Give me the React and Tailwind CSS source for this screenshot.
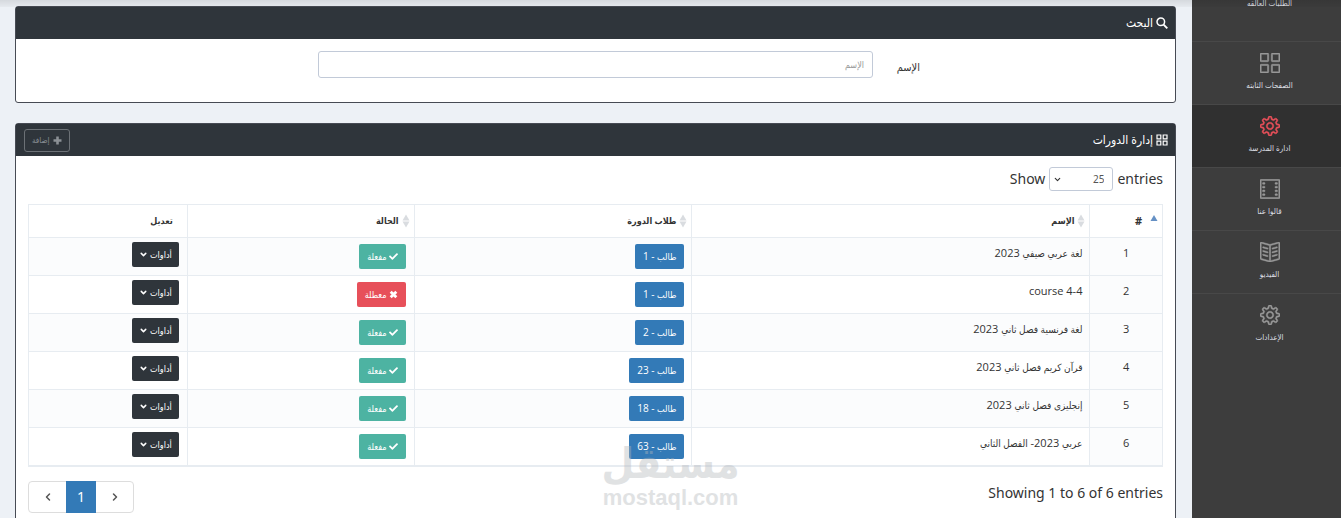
import React from "react";
import { SlSettings, SlFilm, SlBookOpen, SlGrid } from "react-icons/sl";
import { FaCheck } from "react-icons/fa";
import { ChevronDown, ChevronLeft, ChevronRight } from "lucide-react";

const navItems = [
  { label: "الصفحات الثابته", icon: SlGrid },
  { label: "ادارة المدرسة", icon: SlSettings, active: true },
  { label: "قالوا عنا", icon: SlFilm },
  { label: "الفيديو", icon: SlBookOpen },
  { label: "الإعدادات", icon: SlSettings },
];

const courses = [
  { id: 1, name: "لغة عربي صيفي 2023", students: 1, active: true },
  { id: 2, name: "course 4-4", students: 1, active: false },
  { id: 3, name: "لغة فرنسية فصل ثاني 2023", students: 2, active: true },
  { id: 4, name: "قرآن كريم فصل ثاني 2023", students: 23, active: true },
  { id: 5, name: "إنجليزى فصل ثاني 2023", students: 18, active: true },
  { id: 6, name: "عربي 2023- الفصل الثاني", students: 63, active: true },
];

// Arabic runs are set one size smaller than Latin letters and digits.
function Mixed({ text }) {
  return text.split(/([\u0600-\u06ff]+(?:\s+[\u0600-\u06ff]+)*)/).map((part, i) =>
    i % 2 === 1 ? (
      <span key={i} className="text-[10px]">
        {part}
      </span>
    ) : (
      part
    )
  );
}

function Cross() {
  return (
    <svg viewBox="0 0 16 16" className="size-[9px]" aria-hidden="true">
      <path d="M3 3l10 10M13 3L3 13" stroke="currentColor" strokeWidth="5" />
    </svg>
  );
}

function Plus() {
  return (
    <svg viewBox="0 0 9 9" className="size-[9px]" aria-hidden="true">
      <path d="M4.500 0.500v8M0.500 4.500h8" stroke="currentColor" strokeWidth="2.600" />
    </svg>
  );
}

function Magnifier() {
  return (
    <svg viewBox="0 0 12 12" className="size-3" fill="none" stroke="currentColor" aria-hidden="true">
      <circle cx="4.800" cy="4.800" r="3.800" strokeWidth="1.500" />
      <path d="M7.600 7.600L11.300 11.300" strokeWidth="1.900" />
    </svg>
  );
}

function Tiles() {
  return (
    <svg viewBox="0 0 12 12" className="size-3" fill="none" stroke="currentColor" strokeWidth="1.200" aria-hidden="true">
      <path d="M1 1h3.800v3.800H1zM7.200 1H11v3.800H7.200zM1 7.200h3.800V11H1zM7.200 7.200H11V11H7.200z" />
    </svg>
  );
}

function SortBoth() {
  return (
    <svg viewBox="0 0 8 14" className="h-[14px] w-2 shrink-0" aria-hidden="true">
      <path d="M4 0.500L7.500 6.500H0.500z" fill="#d9dce0" />
      <path d="M4 13.500L0.500 7.500H7.500z" fill="#d9dce0" />
    </svg>
  );
}

function SortAsc() {
  return (
    <svg viewBox="0 0 8 14" className="h-[14px] w-2 shrink-0" aria-hidden="true">
      <path d="M4 1L7.500 7H0.500z" fill="#6590c4" />
    </svg>
  );
}

function Panel({ icon, title, action, children, className }) {
  return (
    <section className={"rounded-[3px] border border-[#474b54] bg-white " + className}>
      <header className="flex h-8 items-center justify-between bg-[#2f353b] pr-[7px] pl-2 text-white">
        <h2 className="flex items-center gap-[3px] text-xs leading-4">
          {icon}
          {title}
        </h2>
        {action}
      </header>
      {children}
    </section>
  );
}

function HeadCell({ children, sort }) {
  return (
    <th scope="col" className="border border-[#e7ecf1] p-0 font-bold">
      <div
        className={
          "flex h-8 items-center " +
          (sort === "asc" ? "gap-2 pr-1 text-[11px]" : sort ? "gap-[3px] pr-1" : "pr-[14px]")
        }
      >
        {sort === "asc" && <SortAsc />}
        {sort === "both" && <SortBoth />}
        <span>{children}</span>
      </div>
    </th>
  );
}

export default function App() {
  return (
    <div
      dir="rtl"
      className="relative flex h-screen overflow-hidden bg-[#edf1f6] font-['Open_Sans','DejaVu_Sans_Condensed','DejaVu_Sans',sans-serif] text-[#333]"
    >
      <nav className="w-[149px] shrink-0 bg-[#3d3d3d] text-[#dcdfe3]">
        <a href="#pending" className="block h-[41px] overflow-hidden pl-[6px] text-center text-[8px] leading-[6px]">
          الطلبات العالقه
        </a>
        {navItems.map(({ label, icon: Icon, active }) => (
          <a
            key={label}
            href="#section"
            className={
              "flex h-[63px] flex-col items-center gap-[6px] border-t border-[#484848] pt-[11px] pl-[6px] text-[8px] leading-3 " +
              (active ? "bg-[#303030]" : "")
            }
          >
            <Icon className={"size-5 " + (active ? "text-[#e7505a]" : "text-[#999]")} strokeWidth={24} />
            {label}
          </a>
        ))}
      </nav>

      <main className="min-w-0 flex-1 px-4 pt-[6px] pl-[15px]">
        <Panel className="mb-5 h-[97px]" icon={<Magnifier />} title="البحث">
          <div className="flex items-start pt-3 pr-[255px] pl-[302px]">
            <label htmlFor="name" className="w-[47px] shrink-0 pt-2 text-[11px] leading-4">
              الإسم
            </label>
            <input
              id="name"
              type="text"
              placeholder="الإسم"
              className="h-[27px] min-w-0 flex-1 rounded-[3px] border border-[#c2cad8] bg-white px-2 text-[9px] outline-none placeholder:text-[#999]"
            />
          </div>
        </Panel>

        <Panel
          className="h-[440px]"
          icon={<Tiles />}
          title="إدارة الدورات"
          action={
            <button
              type="button"
              className="flex h-[23px] items-center gap-[3px] rounded-[3px] border border-[#6c7176] px-[7px] text-[8px] text-[#8b9095]"
            >
              <Plus />
              إضافة
            </button>
          }
        >
          <div className="px-3 pt-[11px]">
            <div
              dir="ltr"
              className="flex h-6 items-center justify-end gap-1 font-['Noto_Sans','Open_Sans',sans-serif] text-sm"
            >
              <label htmlFor="length">Show</label>
              <span className="relative">
                <select
                  id="length"
                  dir="rtl"
                  defaultValue="25"
                  className="block h-6 w-16 appearance-none rounded-[3px] border border-[#c2cad8] bg-white pr-2 text-[10px] text-[#555] outline-none"
                >
                  <option>25</option>
                  <option>50</option>
                </select>
                <ChevronDown className="pointer-events-none absolute top-2 left-1 size-[9px]" strokeWidth={3} />
              </span>
              <span>entries</span>
            </div>

            <table className="mt-[13px] w-full table-fixed border-collapse border-b-2 border-[#e7ecf1] text-[11px] leading-[18px]">
              <colgroup>
                <col className="w-[6.4%]" />
                <col className="w-[35.1%]" />
                <col className="w-[24.5%]" />
                <col className="w-[20%]" />
                <col className="w-[14%]" />
              </colgroup>
              <thead>
                <tr className="text-[9px]">
                  <HeadCell sort="asc">#</HeadCell>
                  <HeadCell sort="both">الإسم</HeadCell>
                  <HeadCell sort="both">طلاب الدورة</HeadCell>
                  <HeadCell sort="both">الحالة</HeadCell>
                  <HeadCell>تعديل</HeadCell>
                </tr>
              </thead>
              <tbody>
                {courses.map((c) => (
                  <tr key={c.id} className="h-[38px] align-top odd:bg-[#fbfcfd]">
                    <td className="border border-[#e7ecf1] bg-[#fbfcfd] pt-[6px] text-center">{c.id}</td>
                    <td className="border border-[#e7ecf1] pt-[6px] pr-[7px]">
                      <Mixed text={c.name} />
                    </td>
                    <td className="border border-[#e7ecf1] pt-[6px] pr-[7px]">
                      <a
                        href="#students"
                        className="block h-[25px] w-fit rounded-[2px] bg-[#337ab7] px-2 text-[10px] leading-[25px] text-white"
                      >
                        <span className="text-[9px]">طالب</span> - {c.students}
                      </a>
                    </td>
                    <td className="border border-[#e7ecf1] pt-[6px] pr-2">
                      <button
                        type="button"
                        className={
                          "flex h-[25px] items-center gap-[2px] rounded-[2px] px-2 text-[9px] text-white " +
                          (c.active ? "bg-[#4db3a2]" : "bg-[#e7505a]")
                        }
                      >
                        {c.active ? <FaCheck className="size-[9px]" /> : <Cross />}
                        {c.active ? "مفعلة" : "معطلة"}
                      </button>
                    </td>
                    <td className="border border-[#e7ecf1] pt-1 pr-2">
                      <button
                        type="button"
                        className="flex h-[25px] items-center gap-[2px] rounded-[2px] bg-[#2f353b] px-[7px] text-[9px] text-white"
                      >
                        أداوات
                        <ChevronDown className="size-[9px]" strokeWidth={4} />
                      </button>
                    </td>
                  </tr>
                ))}
              </tbody>
            </table>

            <div
              dir="ltr"
              className="mt-[14px] flex items-start justify-between font-['Noto_Sans','Open_Sans',sans-serif] text-sm"
            >
              <div className="flex h-8 rounded-[4px] border border-[#ddd] text-[#555]">
                <button type="button" aria-label="Previous" className="flex w-[37px] items-center justify-center">
                  <ChevronLeft className="size-3" strokeWidth={3} />
                </button>
                <button type="button" className="-my-px w-[30px] bg-[#337ab7] text-white">
                  1
                </button>
                <button type="button" aria-label="Next" className="flex w-[37px] items-center justify-center">
                  <ChevronRight className="size-3" strokeWidth={3} />
                </button>
              </div>
              <p className="pt-[2px]">Showing 1 to 6 of 6 entries</p>
            </div>
          </div>
        </Panel>
      </main>

      <div className="pointer-events-none absolute inset-x-0 top-0 h-[7px] bg-linear-to-b from-black/10 to-black/3" />
      <div className="pointer-events-none absolute bottom-2 left-1/2 flex w-[136px] -translate-x-1/2 flex-col items-center text-[#b4b7bb] opacity-40">
        <span className="font-['DejaVu_Sans_Condensed','DejaVu_Sans',sans-serif] text-[42px] leading-[44px] font-bold">
          مستقل
        </span>
        <span className="font-['Liberation_Sans',sans-serif] text-[22px] leading-6 font-bold">mostaql.com</span>
      </div>
    </div>
  );
}
